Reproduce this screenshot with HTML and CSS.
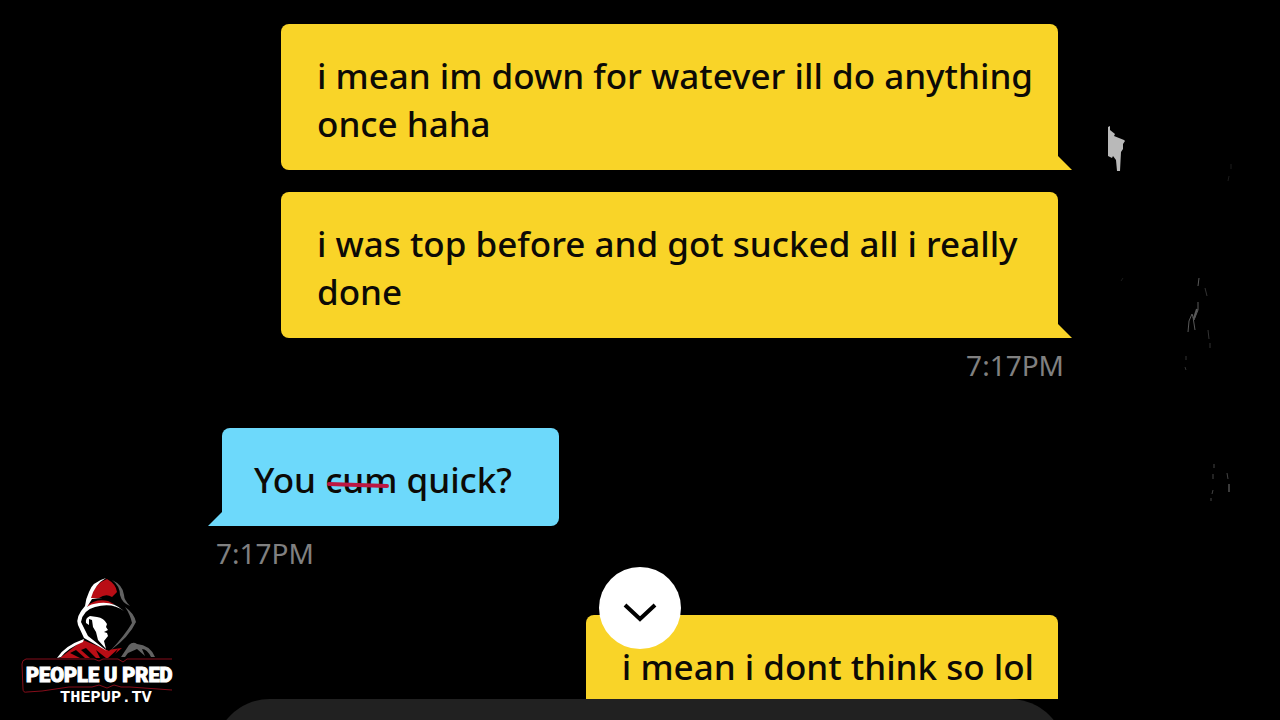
FILE: index.html
```
<!DOCTYPE html>
<html lang="en">
<head>
  <meta charset="UTF-8">
  <meta name="viewport" content="width=device-width, initial-scale=1.0">
  <title>Chat</title>
  <link rel="stylesheet" href="styles.css">
</head>
<body>
  <div class="page">
    <main class="chat">
      <div class="message sent">
        <p class="bubble">i mean im down for watever ill do anything once haha</p>
      </div>
      <div class="message sent">
        <p class="bubble">i was top before and got sucked all i really done</p>
        <time class="time">7:17PM</time>
      </div>
      <div class="message received">
        <p class="bubble">You <s class="struck">cum</s> quick?</p>
        <time class="time">7:17PM</time>
      </div>
      <div class="message sent">
        <p class="bubble">i mean i dont think so lol</p>
      </div>
    </main>

    <footer class="drawer">
      <div class="drawer-sheet"></div>
    </footer>

    <button class="scroll-down" type="button" aria-label="Scroll to latest">
      <svg width="34" height="20" viewBox="0 0 34 20" fill="none" stroke="#000" stroke-width="4">
        <path d="M2 2 L17 16 L32 2"/>
      </svg>
    </button>

    <!-- Scratches on the backdrop -->
    <svg class="scratches" width="190" height="410" viewBox="0 0 190 410">
      <path fill="#b9b9b9" d="M18 17 L20 16 L20 20 L25 24 L24 26 L34 30 L35 31 L33 34 L33 39 L31 42 L30 61 L27 61 L26 50 L23 46 L22 48 L18 46 Z"/>
      <g fill="none" stroke="#5a5a5a" stroke-width="1">
        <path d="M109 168 L108 176 M108 192 L108 200 L104 210 L102 204 L99 211 L98 222 M103 207 L105 220"/>
        <path stroke-width="2" d="M107 199 L104 208"/>
        <path stroke="#333" d="M115 178 L117 186 M118 220 L119 229 M120 233 L120 238 M96 246 L96 250 M95 257 L96 260"/>
        <path stroke="#1c1c1c" d="M141 54 L141 59 M139 66 L138 71 M31 171 L33 168"/>
        <path stroke="#444" d="M124 354 L124 358 M123 364 L123 369 M123 380 L122 384 M121 388 L121 391 M137 363 L138 369"/>
        <path stroke="#777" d="M139 374 L139 382"/>
      </g>
    </svg>

    <!-- Channel logo -->
    <svg class="logo" width="180" height="150" viewBox="0 0 180 150" role="img" aria-label="People U Pred">
      <path fill="#b90d15" d="M50 88 L73 70 L97 80 L112 78 L100 88 Z"/>
      <path fill="#000" d="M66 80 L75 88 L70 88 L60 83 Z M76 78 L86 88 L80 88 L71 80 Z M86 80 L96 88 L90 88 Z M108 79 L103 88 L98 88 Z"/>
      <path fill="#fff" d="M47 88 Q54 76 74 69 L73 72 Q58 78 51 87 Z"/>
      <path fill="#626262" d="M111 87 L119 75 Q123 71 127 74 Q140 75 145 87 L141 87 Q137 79 132 79 L135 86 L127 79 L118 83 L115 87 Z"/>
      <path fill="#000" d="M76 38 Q79 10 96 9 Q112 12 116 34 Q126 49 121 59 L99 81 L71 65 Q66 47 76 38 Z"/>
      <path fill="#b90d15" d="M80 29 Q85 13 97 9 Q106 14 107 22 L102 27 Q96 23 89 28 Z"/>
      <path fill="#b90d15" d="M77 36 Q86 28 98 31 L104 34 Q90 33 79 37 Z"/>
      <path fill="#fff" d="M96 8 Q82 12 79 22 Q76 28 75 36 Q65 47 68 55 L74 68 L97 81 L78 66 L71 52 Q73 40 85 37 Q102 32 114 41 Q103 31 89 33 Q80 34 77 37 L82 29 Q87 28 93 28 L81 28 Q85 14 96 8 Z"/>
      <path fill="#626262" d="M102 10 Q113 15 114 25 Q114 30 120 36 Q112 33 110 25 Q110 16 102 10 Z"/>
      <path fill="#626262" d="M115 37 Q124 43 126 52 Q119 67 101 80 Q115 65 122 53 Q120 44 115 37 Z"/>
      <path fill="#fff" d="M80 46 Q75 48 76 53 L79 55 L79 49 L82 50 L83 57 L86 62 L88 70 L96 79 L94 71 L98 66 L97 63 L94 62 L98 60 L96 57 L97 54 Q94 48 87 47 Z"/>
      <path fill="#000" stroke="#850d1a" stroke-width="1" d="M162 89 H117 L113 92 L108 89 H93 L89 91 L84 89 H16 Q12 90 12 94 L13 119 Q13 123 17 122 L32 121 L59 117 H82 L89 115 L97 118 L104 115 L111 117 H120 L162 120"/>
      <text class="logo-name" x="16" y="112">PEOPLE U PRED</text>
      <text class="logo-site" x="50" y="132">THEPUP.TV</text>
    </svg>
  </div>
</body>
</html>
```
FILE: styles.css
```
* {
  box-sizing: border-box;
}

body {
  margin: 0;
  background: #000;
  color: #0c0a06;
  font-family: "Noto Sans", "Open Sans", sans-serif;
}

.page {
  position: relative;
  display: flex;
  flex-direction: column;
  height: 100vh;
  overflow: hidden;
}

.chat {
  flex: 1;
  min-height: 0;
  width: 100%;
  max-width: 848px;
  margin: 0 auto;
  padding-top: 24px;
  display: flex;
  flex-direction: column;
  gap: 22px;
}

.message {
  display: flex;
  flex-direction: column;
  align-items: flex-start;
}

.sent {
  align-items: flex-end;
}

.bubble {
  position: relative;
  max-width: 777px;
  margin: 0 6px;
  padding: 28px 24px 22px 36px;
  border-radius: 8px;
  background: #f9d428;
  font-size: 35px;
  font-weight: 500;
  line-height: 48px;
}

.sent .bubble {
  border-bottom-right-radius: 0;
}

.received {
  margin: 22px 0 21px;
}

.received .bubble {
  padding-left: 32px;
  padding-right: 47px;
  border-bottom-left-radius: 0;
  background: #6dd9fb;
}

/* Speech tails */
.bubble::after {
  content: "";
  position: absolute;
  bottom: 0;
  width: 14px;
  height: 14px;
  background: inherit;
}

.sent .bubble::after {
  left: 100%;
  clip-path: polygon(0 0, 100% 100%, 0 100%);
}

.received .bubble::after {
  right: 100%;
  clip-path: polygon(100% 0, 100% 100%, 0 100%);
}

.time {
  margin-top: 8px;
  color: #808080;
  font-size: 28px;
  font-weight: 400;
  line-height: 38px;
}

.struck {
  position: relative;
  text-decoration: none;
}

.struck::after {
  content: "";
  position: absolute;
  left: 2px;
  right: 8px;
  top: 27px;
  height: 4px;
  border-radius: 2px;
  background: #bd1742;
  transform: rotate(2deg);
}

.drawer {
  flex: none;
  width: 100%;
  height: 21px;
  background: #000;
  overflow: hidden;
  z-index: 1;
}

.drawer-sheet {
  max-width: 852px;
  height: 120px;
  margin: 0 auto;
  border-radius: 56px;
  background: #212121;
}

.scroll-down {
  position: absolute;
  left: 50%;
  bottom: 71px;
  width: 82px;
  height: 82px;
  padding: 12px 0 0;
  border: none;
  border-radius: 50%;
  background: #fff;
  transform: translateX(-50%);
  cursor: pointer;
}

.scratches {
  position: absolute;
  top: 110px;
  right: 0;
  pointer-events: none;
}

.logo {
  position: absolute;
  left: 10px;
  bottom: 0;
  z-index: 2;
}

.logo-name,
.logo-site {
  fill: #fff;
  font-weight: 700;
}

.logo-name {
  font-family: Roboto, "Liberation Sans", sans-serif;
  font-size: 20px;
  font-weight: 900;
  stroke: #fff;
  stroke-width: 1px;
}

.logo-site {
  font-family: "Liberation Mono", monospace;
  font-size: 17px;
}
```
